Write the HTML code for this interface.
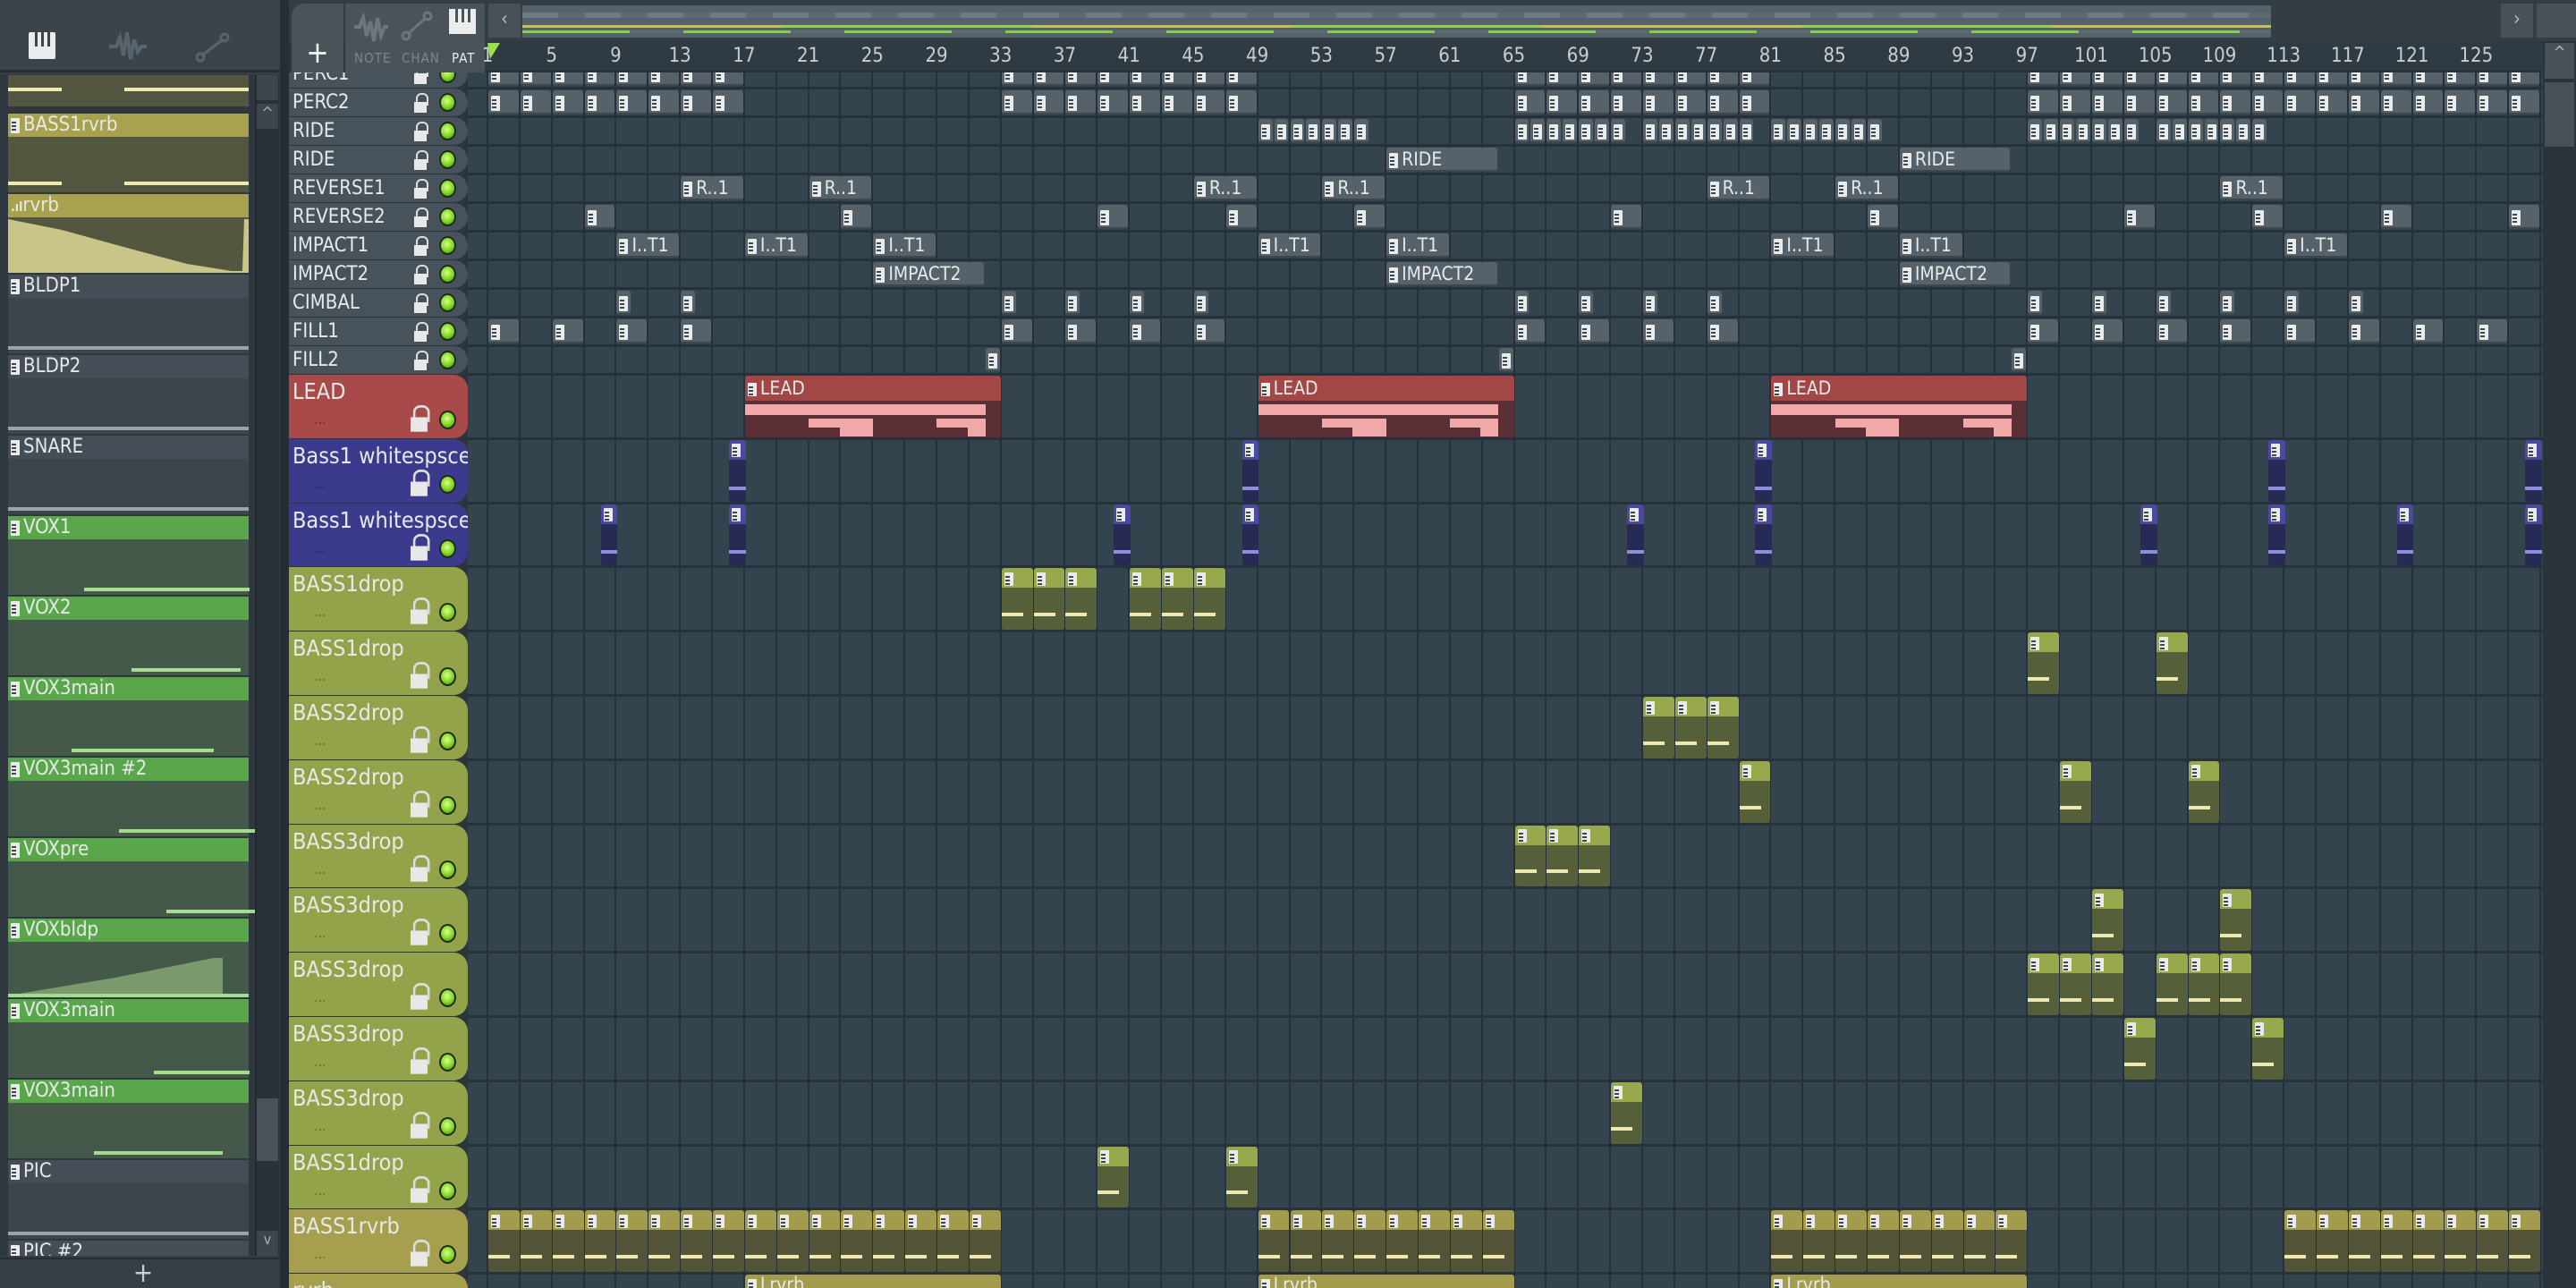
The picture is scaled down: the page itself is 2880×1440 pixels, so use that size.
<!DOCTYPE html>
<html style="overflow:hidden;height:1440px"><head><meta charset="utf-8">
<style>
*{box-sizing:border-box;margin:0;padding:0}
html,body{width:2880px;height:1440px;overflow:hidden}
body{background:#2c353c;font-family:"Liberation Sans Narrow","DejaVu Sans Condensed","Liberation Sans",sans-serif;color:#e6e9ea}
#root{position:relative;width:2880px;height:1440px;overflow:hidden}
.a{position:absolute}
#grid{left:523px;top:81px;width:2320px;height:1359px;background-color:#33444f;overflow:hidden}
.ic{display:inline-block;width:10px;height:17px;background:#e8ecec;position:relative;vertical-align:middle;margin-right:4px;border-radius:1px}
.ic:before{content:"";position:absolute;left:1px;top:4px;width:5px;height:2px;background:#444;box-shadow:0 4px 0 #444,0 8px 0 #444}
.hdr{position:absolute;left:323px;width:200px;border-radius:0 16px 16px 0;overflow:hidden}
.lock{position:absolute;width:14px;height:22px}
.lock:before{content:"";position:absolute;left:2px;top:0;width:10px;height:12px;border:2px solid #ddd;border-bottom:none;border-radius:6px 6px 0 0}
.lock:after{content:"";position:absolute;left:0;top:10px;width:14px;height:12px;background:#e8e8e8}
.lock.big{transform:scale(1.35);transform-origin:left top}
.led{position:absolute;width:19px;height:21px;border-radius:50%;background:radial-gradient(circle at 45% 40%,#d8ff8a,#7fd61e 55%,#3f7a10);border:2px solid #1f2a22}
.clip{position:absolute;overflow:hidden;border-radius:3px}
.tn{position:absolute;left:9px;width:269px}
#thumbs{position:absolute;left:0;top:84px;width:285px;height:1320px;overflow:hidden}
#hdrs{position:absolute;left:0;top:81px;width:523px;height:1359px;overflow:hidden}
</style></head><body><div id="root">
<div class="a" style="left:0;top:0;width:320px;height:1440px;background:#353e45"></div>
<div class="a" style="left:0;top:0;width:320px;height:81px;background:#3b444b;border-bottom:3px solid #262e34"></div>
<div class="a" style="left:32px;top:36px;width:30px;height:30px;background:#e9ecec;border-radius:2px"><div class="a" style="left:7px;top:0;width:3px;height:16px;background:#3b444b"></div><div class="a" style="left:14px;top:0;width:3px;height:16px;background:#3b444b"></div><div class="a" style="left:21px;top:0;width:3px;height:16px;background:#3b444b"></div></div>
<svg class="a" style="left:120px;top:34px" width="44" height="36"><path d="M2 18h8l4-10 4 20 4-26 4 30 4-22 4 14 4-6h6" fill="none" stroke="#59636b" stroke-width="4"/></svg>
<svg class="a" style="left:218px;top:36px" width="40" height="34"><circle cx="6" cy="28" r="4" fill="none" stroke="#59636b" stroke-width="3"/><circle cx="33" cy="6" r="4" fill="none" stroke="#59636b" stroke-width="3"/><path d="M9 25L30 9" stroke="#59636b" stroke-width="3"/></svg>
<div class="a" style="left:0;top:84px;width:288px;height:1320px;background:#2e373e"></div>
<div id="thumbs"></div>
<div class="a" style="left:285px;top:84px;width:27px;height:1320px;background:#2a3238;border-left:2px solid #222a30"></div>
<div class="a" style="left:287px;top:84px;width:24px;height:28px;background:#3d464d"></div>
<div class="a" style="left:287px;top:116px;width:24px;height:28px;background:#3d464d;color:#aab;font-size:18px;text-align:center">^</div>
<div class="a" style="left:287px;top:1228px;width:24px;height:70px;background:#4a535a"></div>
<div class="a" style="left:287px;top:1376px;width:24px;height:28px;background:#3d464d;color:#aab;font-size:16px;text-align:center">v</div>
<div class="a" style="left:0;top:1406px;width:320px;height:34px;background:#353e45;border-top:2px solid #262e34;text-align:center;font-size:30px;color:#c9cdd0;line-height:32px">+</div>
<div class="a" style="left:313px;top:0;width:10px;height:1440px;background:#262e34"></div>
<div class="a" style="left:323px;top:0;width:2557px;height:46px;background:#343d44"></div>
<div class="a" style="left:326px;top:4px;width:58px;height:77px;background:#4a535a;border-radius:14px 0 0 0;text-align:center;font-size:34px;line-height:110px;color:#eee">+</div>
<div class="a" style="left:386px;top:4px;width:156px;height:77px;background:#4a535a"></div>
<svg class="a" style="left:394px;top:12px" width="40" height="36"><path d="M2 18h6l4-10 4 20 4-16 4 22 4-26 4 20 4-10h4" fill="none" stroke="#6d767d" stroke-width="4"/></svg>
<svg class="a" style="left:448px;top:12px" width="36" height="34"><circle cx="6" cy="28" r="4" fill="none" stroke="#6d767d" stroke-width="3"/><circle cx="30" cy="6" r="4" fill="none" stroke="#6d767d" stroke-width="3"/><path d="M9 25L27 9" stroke="#6d767d" stroke-width="3"/></svg>
<div class="a" style="left:502px;top:10px;width:30px;height:28px;background:#eceeee"><div class="a" style="left:7px;top:0;width:3px;height:15px;background:#4a535a"></div><div class="a" style="left:14px;top:0;width:3px;height:15px;background:#4a535a"></div><div class="a" style="left:21px;top:0;width:3px;height:15px;background:#4a535a"></div></div>
<div class="a" style="left:396px;top:56px;font-size:15px;color:#7c858c;letter-spacing:1px">NOTE</div>
<div class="a" style="left:449px;top:56px;font-size:15px;color:#7c858c;letter-spacing:1px">CHAN</div>
<div class="a" style="left:505px;top:56px;font-size:15px;color:#e8ecec;letter-spacing:1px">PAT</div>
<div class="a" style="left:546px;top:4px;width:36px;height:38px;background:#485158;color:#bbb;font-size:22px;text-align:center;line-height:36px">‹</div>
<div class="a" style="left:584px;top:6px;width:1955px;height:36px;background:#56626b"></div>
<div class="a" style="left:584px;top:14px;width:1955px;height:6px;background:repeating-linear-gradient(90deg,#6e7a82 0 40px,#5e6a72 40px 70px)"></div>
<div class="a" style="left:584px;top:28px;width:1955px;height:3px;background:repeating-linear-gradient(90deg,#c9c04e 0 290px,#8fd24a 290px 570px)"></div>
<div class="a" style="left:584px;top:34px;width:1955px;height:3px;background:repeating-linear-gradient(90deg,#7fd24a 0 120px,#5e6a72 120px 180px)"></div>
<div class="a" style="left:2796px;top:4px;width:36px;height:38px;background:#485158;color:#bbb;font-size:22px;text-align:center;line-height:36px">›</div>
<div class="a" style="left:2836px;top:4px;width:44px;height:38px;background:#485158"></div>
<div class="a" style="left:542px;top:46px;width:2301px;height:35px;background:#2f3a42;border-bottom:2px solid #24303a"></div>
<div id="ruler"></div>
<svg class="a" style="left:545px;top:48px" width="16" height="20"><path d="M0 0h14L3 18z" fill="#9be04a"/></svg>
<div class="a" style="left:2843px;top:46px;width:37px;height:1394px;background:#2a3339"></div>
<div class="a" style="left:2845px;top:48px;width:33px;height:40px;background:#485158;color:#bbb;text-align:center;font-size:18px">^</div>
<div class="a" style="left:2845px;top:92px;width:33px;height:72px;background:#485158"></div>
<div id="grid" class="a"></div>
<div id="hdrs"></div>
</div>
<script>
const X0=545,BW=17.93;
const X=b=>X0+(b-1)*BW, W=l=>l*BW;
const g=document.getElementById('grid');
let gl='';for(let b=1;b<=130;b+=2){gl+=`<div class="a" style="left:${X(b)-523-1}px;top:0;width:2px;height:1359px;background:#25313a"></div>`;}
function rng(a,b,s){let r=[];for(let i=a;i<=b;i+=s)r.push(i);return r}
const pe=[...rng(1,15,2),...rng(33,47,2),...rng(65,79,2),...rng(97,127,2)];
const rows=[
['PERC1','s',pe.map(b=>[b,2,''])],
['PERC2','s',pe.map(b=>[b,2,''])],
['RIDE','s',[...rng(49,55,1),...rng(65,71,1),...rng(73,79,1),...rng(81,87,1),...rng(97,103,1),...rng(105,111,1)].map(b=>[b,1,''])],
['RIDE','s',[[57,7,'RIDE'],[89,7,'RIDE']]],
['REVERSE1','s',[13,21,45,53,77,85,109].map(b=>[b,4,'R..1'])],
['REVERSE2','s',[7,23,39,47,55,71,87,103,111,119,127].map(b=>[b,2,''])],
['IMPACT1','s',[9,17,25,49,57,81,89,113].map(b=>[b,4,'I..T1'])],
['IMPACT2','s',[[25,7,'IMPACT2'],[57,7,'IMPACT2'],[89,7,'IMPACT2']]],
['CIMBAL','s',[9,13,33,37,41,45,65,69,73,77,97,101,105,109,113,117].map(b=>[b,1,''])],
['FILL1','s',[1,5,9,13,33,37,41,45,65,69,73,77,97,101,105,109,113,117,121,125].map(b=>[b,2,''])],
['FILL2','s',[32,64,96].map(b=>[b,1,''])],
['LEAD','t',[[17,16,'LEAD'],[49,16,'LEAD'],[81,16,'LEAD']],'#a84a4a','lead'],
['Bass1 whitespsce','t',[16,48,80,112,128].map(b=>[b,1.1,'']),'#3c3a8c','blue'],
['Bass1 whitespsce..','t',[8,16,40,48,72,80,104,112,120,128].map(b=>[b,1.1,'']),'#3c3a8c','blue'],
['BASS1drop','t',[33,35,37,41,43,45].map(b=>[b,2,'']),'#93a34a','grn'],
['BASS1drop','t',[97,105].map(b=>[b,2,'']),'#93a34a','grn'],
['BASS2drop','t',[73,75,77].map(b=>[b,2,'']),'#93a34a','grn'],
['BASS2drop','t',[79,99,107].map(b=>[b,2,'']),'#93a34a','grn'],
['BASS3drop','t',[65,67,69].map(b=>[b,2,'']),'#93a34a','grn'],
['BASS3drop','t',[101,109].map(b=>[b,2,'']),'#93a34a','grn'],
['BASS3drop','t',[97,99,101,105,107,109].map(b=>[b,2,'']),'#93a34a','grn'],
['BASS3drop','t',[103,111].map(b=>[b,2,'']),'#93a34a','grn'],
['BASS3drop','t',[71].map(b=>[b,2,'']),'#93a34a','grn'],
['BASS1drop','t',[39,47].map(b=>[b,2,'']),'#93a34a','grn'],
['BASS1rvrb','t',[...rng(1,31,2),...rng(49,63,2),...rng(81,95,2),...rng(113,127,2)].map(b=>[b,2,'']),'#a6a04e','olv'],
['rvrb','t',[[17,16,'Lrvrb'],[49,16,'Lrvrb'],[81,16,'Lrvrb']],'#a6a04e','olv'],
];
let y=67,h='',c='';
const cc={lead:['#a34646','#5a2f35'],blue:['#4c4aa0','#262a55'],grn:['#98a84c','#55603a'],olv:['#a39c4c','#535437']};
rows.forEach(r=>{
 const [n,t,cl,col,k]=r; const rh=t=='s'?32:71.8; const yy=y-81;
 if(t=='s'){
  h+=`<div class="hdr" style="top:${yy}px;height:${rh-1}px;background:#48525a"><div class="a" style="left:4px;top:3px;font-size:22px">${n}</div><div class="lock" style="left:140px;top:5px"></div><div class="led" style="left:168px;top:5px"></div></div>`;
  cl.forEach(([b,l,lab])=>{c+=`<div class="clip" style="left:${X(b)-523+1}px;top:${yy+2}px;width:${W(l)-2}px;height:${rh-5}px;background:#56616a;border-bottom:2px solid #3d474e;font-size:21px;line-height:${rh-6}px;padding-left:3px;white-space:nowrap"><span class="ic"></span>${lab}</div>`});
 } else {
  h+=`<div class="hdr" style="top:${yy}px;height:${rh-1}px;background:${col}"><div class="a" style="left:4px;top:4px;font-size:25px;white-space:nowrap">${n}</div><div class="a" style="left:28px;top:40px;font-size:16px;color:rgba(0,0,0,.35)">...</div><div class="lock big" style="left:136px;top:34px"></div><div class="led" style="left:168px;top:40px"></div></div>`;
  const [hc,bc]=cc[k]; const hh=k=='lead'?28:22;
  cl.forEach(([b,l,lab])=>{
   let inner=`<div class="a" style="left:0;top:0;right:0;height:${hh}px;background:${hc};font-size:21px;line-height:${hh}px;padding-left:3px;white-space:nowrap;border-radius:3px 3px 0 0"><span class="ic" style="height:15px"></span>${lab}</div>`;
   if(k=='lead'){inner+=`<div class="a" style="left:0;top:${hh+4}px;width:94%;height:12px;background:#f0a8a8"></div><div class="a" style="left:25%;top:${hh+20}px;width:25%;height:10px;background:#f0a8a8"></div><div class="a" style="left:37%;top:${hh+28}px;width:13%;height:12px;background:#f0a8a8"></div><div class="a" style="left:75%;top:${hh+20}px;width:19%;height:10px;background:#f0a8a8"></div><div class="a" style="left:87%;top:${hh+28}px;width:7%;height:12px;background:#f0a8a8"></div>`}
   else if(k=='blue'){inner+=`<div class="a" style="left:0;top:${rh-20}px;width:100%;height:4px;background:#8e8ee0"></div>`}
   else {inner+=`<div class="a" style="left:0;top:${rh-22}px;width:100%;height:4px;background:repeating-linear-gradient(90deg,#eee9b0 0 24px,transparent 24px 36px)"></div>`}
   c+=`<div class="clip" style="left:${X(b)-523+1}px;top:${yy+1}px;width:${W(l)-1}px;height:${rh-3}px;background:${bc}">${inner}</div>`;
  });
 }
 gl+=`<div class="a" style="left:0;top:${yy+rh-2}px;width:2320px;height:3px;background:#26313a"></div>`;
 y+=rh;
});
g.innerHTML=gl+c;
document.getElementById('hdrs').innerHTML=h;
let rl='';for(let b=1;b<=125;b+=4){rl+=`<div class="a" style="left:${X(b)-30}px;top:50px;width:60px;text-align:center;font-size:22px;color:#c8cdd0">${b}</div>`}
document.getElementById('ruler').innerHTML=rl;
const th=[['BASS1rvrb','o'],['rvrb','r'],['BLDP1','g'],['BLDP2','g'],['SNARE','g'],['VOX1','v'],['VOX2','v'],['VOX3main','v'],['VOX3main #2','v'],['VOXpre','v'],['VOXbldp','vb'],['VOX3main','v'],['VOX3main','v'],['PIC','g'],['PIC #2','g']];
let t=`<div class="tn" style="top:0;height:35px;background:#54573f"><div class="a" style="left:0;top:14px;width:60px;height:4px;background:#eee9b0"></div><div class="a" style="left:130px;top:14px;width:139px;height:4px;background:#eee9b0"></div></div>`;
th.forEach(([n,k],i)=>{const ty=43+i*90;
 const hc={o:'#a8a24e',r:'#a8a24e',g:'#454e56',v:'#5aa64a',vb:'#5aa64a'}[k], bc={o:'#54573f',r:'#54573f',g:'#3c454c',v:'#44594a',vb:'#44594a'}[k];
 let body='';
 if(k=='o')body=`<div class="a" style="left:0;top:50px;width:60px;height:4px;background:#eee9b0"></div><div class="a" style="left:130px;top:50px;width:139px;height:4px;background:#eee9b0"></div>`;
 if(k=='r')body=`<svg class="a" style="left:0;top:0" width="269" height="62"><path d="M0 2 L60 14 L140 36 L200 52 L250 60 L262 60 L264 2 L269 2 L269 62 L0 62Z" fill="#c9c488"/></svg>`;
 if(k=='g')body=`<div class="a" style="left:0;top:54px;width:269px;height:4px;background:#9ba3a8"></div>`;
 if(k=='v')body=`<div class="a" style="left:${(i*53)%120+60}px;top:54px;width:${100+(i*37)%100}px;height:4px;background:#a6dc8e"></div>`;
 if(k=='vb')body=`<svg class="a" style="left:0;top:0" width="269" height="62"><path d="M0 60 L120 40 L230 18 L240 18 L240 62 L0 62Z" fill="#7a9a6e"/></svg><div class="a" style="left:0;top:58px;width:269px;height:4px;background:#a6dc8e"></div>`;
 t+=`<div class="tn" style="top:${ty}px;height:26px;background:${hc};font-size:22px;line-height:26px;padding-left:3px;white-space:nowrap">${k=='r'?'<b style="font-size:14px">.ıl</b>':'<span class="ic"></span>'}${n}</div><div class="tn" style="top:${ty+26}px;height:62px;background:${bc}">${body}</div>`;
});
document.getElementById('thumbs').innerHTML=t;
</script>
</body></html>
